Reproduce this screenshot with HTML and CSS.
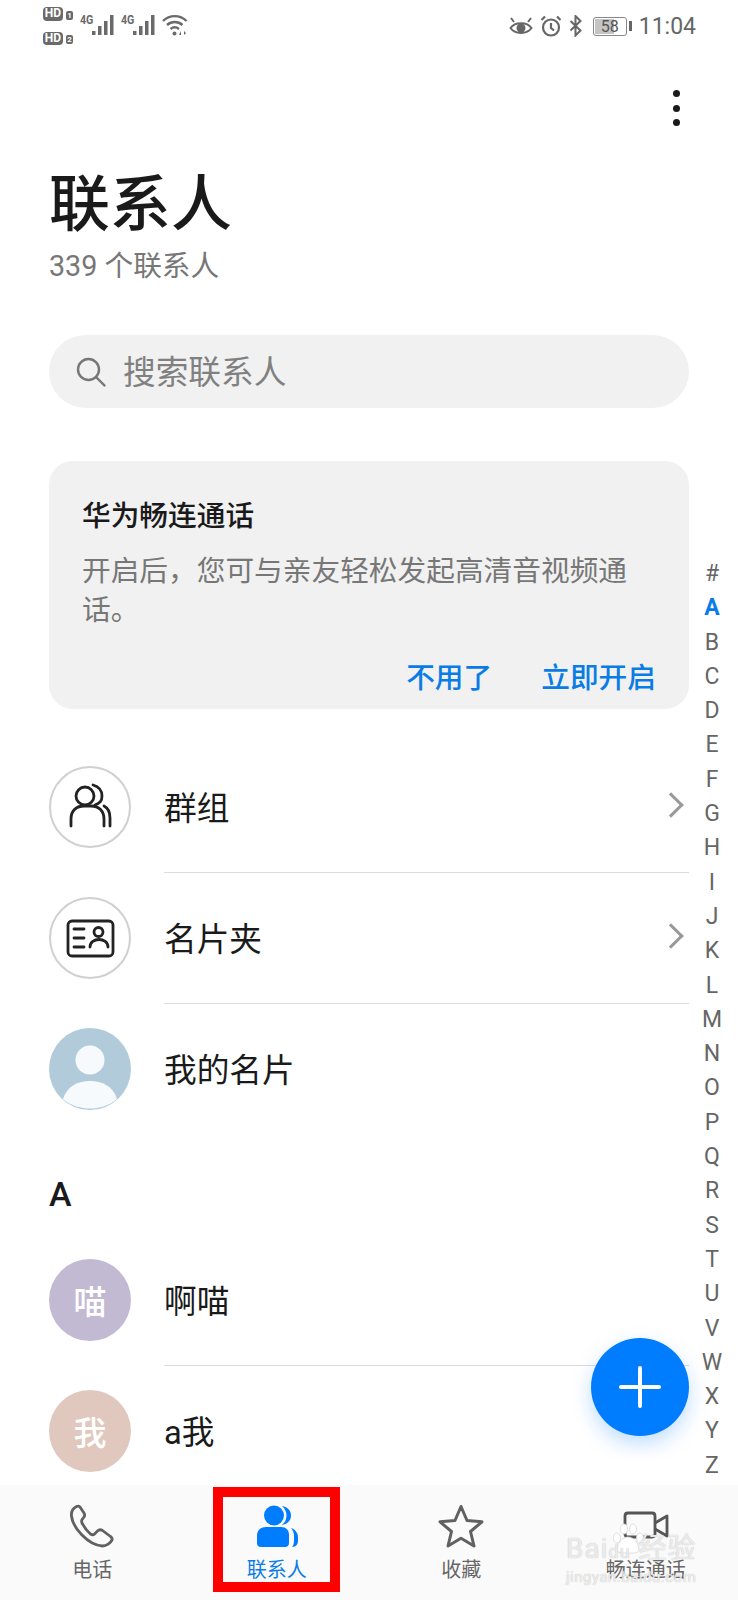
FILE: index.html
```html
<!DOCTYPE html>
<html lang="zh">
<head>
    <meta charset="utf-8">
    <title>联系人</title>
    <link rel="stylesheet" href="styles.css">
</head>
<body>
<div class="screen">
    <div class="status">
        <div class="status-left">
            <div class="hd-col">
                <div class="hd"><span class="hd-tag">HD</span><span class="hd-num">1</span></div>
                <div class="hd"><span class="hd-tag">HD</span><span class="hd-num">2</span></div>
            </div>
            <div class="net">
                <span class="net-label">4G</span>
                <svg width="23" height="21" viewBox="0 0 23 21"><rect x="0" y="16" width="3.500" height="4"/><rect x="6" y="11" width="3.500" height="9"/><rect x="12" y="6" width="3.500" height="14"/><rect x="18" y="0" width="3.500" height="20"/></svg>
            </div>
            <div class="net">
                <span class="net-label">4G</span>
                <svg width="23" height="21" viewBox="0 0 23 21"><rect x="0" y="16" width="3.500" height="4"/><rect x="6" y="11" width="3.500" height="9"/><rect x="12" y="6" width="3.500" height="14"/><rect x="18" y="0" width="3.500" height="20"/></svg>
            </div>
            <svg class="wifi" width="27" height="22" viewBox="0 0 27 22" fill="none" stroke="#6a6a6a" stroke-width="2.400"><path d="M1 7C7.500 0.500 18 0.500 24.500 7"/><path d="M5 11C9.500 7 16 7 20.500 11"/><path d="M8.500 15C11 13 14.500 13 17 15"/><circle cx="12.500" cy="19.500" r="2" fill="#6a6a6a" stroke="none"/><path d="M17 21l2-4v4zM22 17l2 2-2 2z" fill="#6a6a6a" stroke="none"/></svg>
        </div>
        <div class="status-right">
            <svg width="24" height="22" viewBox="0 0 24 22" fill="none" stroke="#666" stroke-width="2"><path d="M1.500 13C6 6.500 18 6.500 22.500 13 18 19.500 6 19.500 1.500 13Z"/><circle cx="12" cy="13" r="4.500" fill="#666" stroke="none"/><path d="M2 3l3 4M22 3l-3 4"/></svg>
            <svg width="22" height="22" viewBox="0 0 22 22" fill="none" stroke="#666" stroke-width="2.200"><circle cx="11" cy="12.500" r="8"/><path d="M11 8v5l3 2.500M1.500 5L5 1.500M20.500 5L17 1.500"/></svg>
            <svg class="bt" width="13" height="22" viewBox="0 0 12 22" fill="none" stroke="#666" stroke-width="2"><path d="M1 6l10 9.500-5 5V1l5 5L1 15.500"/></svg>
            <div class="battery"><div class="battery-body"><span class="battery-fill"></span><span class="battery-num">58</span></div><span class="battery-tip"></span></div>
            <span class="clock">11:04</span>
        </div>
    </div>

    <div class="main">
        <div class="toolbar">
            <div class="kebab"><span></span><span></span><span></span></div>
        </div>
        <h1 class="title">联系人</h1>
        <div class="count">339 个联系人</div>

        <div class="search">
            <svg width="34" height="34" viewBox="0 0 34 34" fill="none" stroke="#777" stroke-width="2.400" stroke-linecap="round"><circle cx="14.500" cy="14.500" r="10.500"/><path d="M22.500 22.500l8 8"/></svg>
            <span>搜索联系人</span>
        </div>

        <div class="card">
            <div class="card-title">华为畅连通话</div>
            <div class="card-text">开启后，您可与亲友轻松发起高清音视频通话。</div>
            <div class="card-actions">
                <span>不用了</span>
                <span>立即开启</span>
            </div>
        </div>

        <div class="list">
            <div class="row">
                <div class="avatar outline">
                    <svg width="78" height="78" viewBox="1 1 78 78" fill="none" stroke="#222" stroke-width="2.800" stroke-linecap="round"><circle cx="35" cy="29" r="9"/><path d="M43 18c7 2 9 6 9 11s-2 7-7 9"/><path d="M21 59v-7c0-9 6-13 13-13h7c8 0 13 5 13 13v7"/><path d="M54 39c4 2 6 7 6 12v8"/></svg>
                </div>
                <div class="row-body"><span>群组</span><span class="chev"></span></div>
            </div>
            <div class="row">
                <div class="avatar outline">
                    <svg width="78" height="78" viewBox="1 1 78 78" fill="none" stroke="#222" stroke-width="2.800" stroke-linecap="round"><rect x="18" y="23" width="45" height="35" rx="4"/><path d="M24 31h10M24 40h10M24 49h10"/><circle cx="48.500" cy="34" r="4.500"/><path d="M40 49c0-10 18-10 18 0"/></svg>
                </div>
                <div class="row-body"><span>名片夹</span><span class="chev"></span></div>
            </div>
            <div class="row last">
                <div class="avatar me">
                    <svg width="82" height="82" viewBox="0 0 82 82"><circle cx="41" cy="32" r="14.500" fill="#f6fafc"/><path d="M14 71C18 58 29 53 41 53S64 58 68 71C60 78 50 80.500 41 80.500S22 78 14 71Z" fill="#f6fafc"/></svg>
                </div>
                <div class="row-body"><span>我的名片</span></div>
            </div>
        </div>

        <div class="section">A</div>
        <div class="list">
            <div class="row">
                <div class="avatar purple">喵</div>
                <div class="row-body"><span>啊喵</span></div>
            </div>
            <div class="row last">
                <div class="avatar peach">我</div>
                <div class="row-body"><span>a我</span></div>
            </div>
        </div>
    </div>

    <div class="nav">
        <div class="nav-item">
            <svg width="48" height="48" viewBox="-1.500 0 48 48" fill="none" stroke="#616161" stroke-width="2.800" stroke-linejoin="round"><path d="M7 3.500C4 5 1.500 8 2 13 3 24 18 42 33 43 37 43 41 40 42.500 37 43 35.500 42.500 34.500 41 33.500L33 27.500C31 26.300 29.500 26.500 28 28L25 31C24 32 22.500 32 21 31 17.500 28 14.500 24 12.500 20 11.700 18 12 17 13 16L14.500 14C15.500 12.500 15.500 11.500 14.500 10L10.500 4C9.500 3 8.500 2.800 7 3.500Z"/></svg>
            <span>电话</span>
        </div>
        <div class="nav-item active">
            <svg width="48" height="48" viewBox="0 0 48 48" fill="#007dff"><circle cx="21" cy="12.500" r="10"/><path d="M29 3C35 4 38 8 38 12.500S35 21 29 22C32 19.500 33.500 16 33.500 12.500S32 5.500 29 3Z"/><path d="M13 24h15c5 0 8 3 8 8v8c0 2.500-1.500 4-4 4H8c-2.500 0-4-1.500-4-4v-7c0-5.500 3-9 9-9Z"/><path d="M38 25C42 26 45 30 45 34V38C45 41 43 44 39 44 40.500 42.500 41 40 41 38V33C41 30 40 27 38 25Z"/></svg>
            <span>联系人</span>
        </div>
        <div class="nav-item">
            <svg width="48" height="48" viewBox="0 0 48 48" fill="none" stroke="#616161" stroke-width="3" stroke-linejoin="round"><path d="M24 3.500l6 14 15 1.300-11.500 9.700 3.500 14.500-13-7.700-13 7.700 3.500-14.500L3 18.800l15-1.300Z"/></svg>
            <span>收藏</span>
        </div>
        <div class="nav-item">
            <svg width="48" height="48" viewBox="0 0 48 48" fill="none" stroke="#555" stroke-width="2.800" stroke-linejoin="round"><path d="M6 10h24c2 0 3 1 3 3v18c0 2-1 3-3 3H6c-2 0-3-1-3-3V13c0-2 1-3 3-3Z"/><path d="M33 20l12-7v20l-12-7"/></svg>
            <span>畅连通话</span>
        </div>
    </div>

    <div class="index">
        <span>#</span><span class="current">A</span><span>B</span><span>C</span><span>D</span><span>E</span><span>F</span><span>G</span><span>H</span><span>I</span><span>J</span><span>K</span><span>L</span><span>M</span><span>N</span><span>O</span><span>P</span><span>Q</span><span>R</span><span>S</span><span>T</span><span>U</span><span>V</span><span>W</span><span>X</span><span>Y</span><span>Z</span>
    </div>

    <div class="fab">
        <svg width="42" height="42" viewBox="0 0 42 42" stroke="#fff" stroke-width="4" stroke-linecap="round"><path d="M21 2v38M2 21h38"/></svg>
    </div>

    <div class="marker"></div>

    <div class="watermark">
        <svg class="wm-paw" width="36" height="36" viewBox="0 0 36 36" fill="#fff" stroke="#d8d8d8" stroke-width="0.800"><ellipse cx="8" cy="17" rx="3.500" ry="5"/><ellipse cx="15" cy="8" rx="3.500" ry="5"/><ellipse cx="24" cy="8" rx="3.500" ry="5"/><ellipse cx="31" cy="17" rx="3.500" ry="5"/><path d="M19 16c-6 0-11 7-11 12 0 5 6 4 11 4s11 1 11-4c0-5-5-12-11-12Z"/></svg>
        <div class="wm-logo">Bai<i>du</i> 经验</div>
        <div class="wm-url">jingyan.baidu.com</div>
    </div>
</div>
</body>
</html>
```

FILE: styles.css
```css
* {
    box-sizing: border-box;
}

html, body {
    margin: 0;
    padding: 0;
    background: #fff;
}

body {
    font-family: Roboto, "Noto Sans CJK SC", sans-serif;
    color: #1a1a1a;
}

.screen {
    position: relative;
    width: 738px;
    height: 1600px;
    overflow: hidden;
    display: flex;
    flex-direction: column;
}

/* status bar */
.status {
    height: 54px;
    flex: none;
    display: flex;
    justify-content: space-between;
    padding: 0 42px 0 43px;
}

.status-left {
    display: flex;
    align-items: flex-start;
}

.hd-col {
    display: flex;
    flex-direction: column;
    gap: 11px;
    padding-top: 7px;
    width: 37px;
}

.hd {
    display: flex;
    align-items: center;
    gap: 3px;
    height: 13.500px;
}

.hd-tag {
    background: #6a6a6a;
    color: #fff;
    font-size: 12px;
    font-weight: 700;
    line-height: 13.500px;
    width: 20px;
    text-align: center;
    border-radius: 4px;
}

.hd-num {
    background: #6a6a6a;
    color: #fff;
    font-size: 8px;
    font-weight: 700;
    line-height: 9px;
    width: 7px;
    margin-top: 3px;
    text-align: center;
    border-radius: 2px;
}

.net {
    width: 41px;
    height: 36px;
    position: relative;
    padding: 15px 0 0 12px;
}

.net svg {
    fill: #6a6a6a;
    display: block;
}

.net-label {
    position: absolute;
    left: 0;
    top: 15px;
    font-size: 13px;
    line-height: 10px;
    font-weight: 700;
    color: #6a6a6a;
    transform: scaleX(0.82);
    transform-origin: left;
}

.wifi {
    margin-top: 14px;
}

.status-right {
    display: flex;
    align-items: center;
    height: 52px;
}

.status-right svg {
    margin-right: 7px;
}

.status-right .bt {
    margin-right: 11px;
}

.battery {
    display: flex;
    align-items: center;
    gap: 2px;
    margin-right: 7px;
}

.battery-body {
    position: relative;
    width: 34px;
    height: 19px;
    border: 1px solid #888;
    border-radius: 3px;
    text-align: center;
    background: #fff;
}

.battery-fill {
    position: absolute;
    left: 1px;
    top: 1px;
    bottom: 1px;
    width: 60%;
    background: #c4c4c4;
}

.battery-num {
    position: relative;
    font-size: 16px;
    line-height: 17px;
    display: block;
    color: #555;
}

.battery-tip {
    width: 3px;
    height: 10px;
    background: #666;
}

.clock {
    font-size: 23px;
    color: #666;
}

/* main content */
.main {
    flex: 1;
    overflow: hidden;
    min-height: 0;
}

.toolbar {
    height: 119px;
    padding: 36px 0 0 673px;
}

.kebab {
    display: flex;
    flex-direction: column;
    gap: 7.500px;
    width: 7px;
}

.kebab span {
    width: 7px;
    height: 7px;
    border-radius: 50%;
    background: #1a1a1a;
}

.title {
    margin: 0 0 0 49px;
    font-size: 61px;
    font-weight: 500;
    line-height: 64px;
}

.count {
    margin: 11px 0 0 49px;
    font-size: 28.700px;
    line-height: 36px;
    color: #777;
}

.search {
    margin: 51px 49px 0;
    height: 73px;
    border-radius: 37px;
    background: #f1f1f1;
    display: flex;
    align-items: center;
    padding-left: 25px;
    gap: 15px;
    font-size: 32.700px;
    color: #808080;
}

.search span {
    padding-bottom: 4px;
}

.card {
    margin: 53px 49px 0;
    height: 248px;
    border-radius: 24px;
    background: #f1f1f1;
    padding: 36px 33px 0;
}

.card-title {
    font-size: 28.700px;
    line-height: 38px;
    font-weight: 500;
}

.card-text {
    margin-top: 17px;
    font-size: 28.700px;
    line-height: 39px;
    color: #777;
}

.card-actions {
    margin-top: 29px;
    display: flex;
    justify-content: flex-end;
    gap: 49px;
    font-size: 28.700px;
    font-weight: 500;
    line-height: 38px;
    color: #0a7ce6;
}

.list {
    margin-top: 32px;
}

.row {
    height: 131px;
    display: flex;
    align-items: center;
    padding-left: 49px;
}

.avatar {
    width: 82px;
    height: 82px;
    flex: none;
    border-radius: 50%;
    display: flex;
    align-items: center;
    justify-content: center;
    color: #fff;
    font-size: 33px;
    font-weight: 500;
    overflow: hidden;
}

.outline {
    border: 2px solid #d0d0d0;
}

.me {
    background: #b2cbdb;
}

.purple {
    background: #c2b9d3;
}

.peach {
    background: #e0c8be;
}

.row-body {
    margin: 0 49px -1px 33px;
    flex: 1;
    align-self: stretch;
    display: flex;
    align-items: center;
    justify-content: space-between;
    font-size: 32.700px;
    padding-bottom: 3px;
    border-bottom: 1px solid #dcdcdc;
}

.last .row-body {
    border-bottom: none;
}

.chev {
    width: 18px;
    height: 18px;
    margin-right: 9px;
    border-top: 3px solid #999;
    border-right: 3px solid #999;
    transform: rotate(45deg);
}

.section {
    margin: 40px 0 0 49px;
    font-size: 34px;
    font-weight: 500;
    line-height: 40px;
    height: 40px;
}

.section + .list {
    margin-top: 20px;
}

/* bottom bar */
.nav {
    height: 115px;
    flex: none;
    background: #fafafa;
    display: grid;
    grid-template-columns: repeat(4, 1fr);
    position: relative;
}

.nav-item {
    display: flex;
    flex-direction: column;
    align-items: center;
    padding-top: 18px;
    font-size: 20px;
    line-height: 28px;
    color: #666;
}

.nav-item svg {
    display: block;
    margin-bottom: 5px;
}

.nav-item.active {
    color: #0a7ce6;
}

/* overlays */
.index {
    position: absolute;
    right: 16px;
    top: 557px;
    width: 20px;
    display: flex;
    flex-direction: column;
    align-items: center;
    font-size: 23px;
    color: #666;
}

.index span {
    height: 34.300px;
    line-height: 34.300px;
}

.index .current {
    color: #0a7ce6;
    font-weight: 700;
}

.fab {
    position: absolute;
    left: 591px;
    top: 1338px;
    width: 98px;
    height: 98px;
    border-radius: 50%;
    background: #007dff;
    box-shadow: 0 8px 20px rgba(0, 125, 255, 0.25);
    display: flex;
    align-items: center;
    justify-content: center;
}

.marker {
    position: absolute;
    left: 213px;
    top: 1487px;
    width: 127px;
    height: 105px;
    border: 10px solid #ff0000;
}

.watermark {
    position: absolute;
    left: 566px;
    top: 1534px;
    color: rgba(255, 255, 255, 0.75);
    text-shadow: 0 0 1px #aaa;
}

.wm-paw {
    position: absolute;
    left: 43px;
    top: -13px;
}

.wm-logo {
    position: relative;
    font-size: 28px;
    line-height: 30px;
    letter-spacing: 1px;
    white-space: nowrap;
}

.wm-logo i {
    font-style: normal;
    font-size: 18px;
}

.wm-url {
    position: relative;
    font-size: 15px;
    line-height: 20px;
    letter-spacing: 0.5px;
}
```
